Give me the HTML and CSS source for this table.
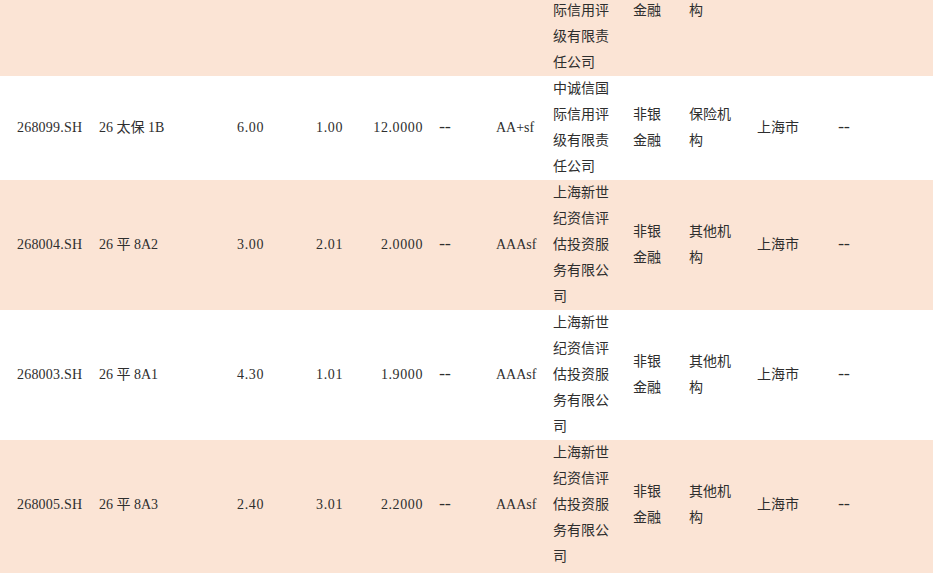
FILE: index.html
```html
<!DOCTYPE html>
<html lang="zh-CN">
<head>
<meta charset="utf-8">
<title>债券列表</title>
<link rel="stylesheet" href="styles.css">
</head>
<body>
<table class="bonds">
  <colgroup>
    <col class="w-code"><col class="w-name"><col class="w-n1"><col class="w-n2"><col class="w-n3"><col class="w-dash"><col class="w-rate"><col class="w-org"><col class="w-type"><col class="w-sub"><col class="w-city"><col class="w-last">
  </colgroup>
  <tbody>
    <tr class="odd clip">
      <td class="code"></td><td></td><td></td><td></td><td></td><td></td><td></td>
      <td>际信用评级有限责任公司</td>
      <td>金融</td>
      <td>构</td>
      <td></td><td></td>
    </tr>
    <tr class="even">
      <td class="code">268099.SH</td>
      <td>26 太保 1B</td>
      <td class="num">6.00</td>
      <td class="num">1.00</td>
      <td class="num">12.0000</td>
      <td class="dash">--</td>
      <td>AA+sf</td>
      <td>中诚信国际信用评级有限责任公司</td>
      <td>非银金融</td>
      <td>保险机构</td>
      <td>上海市</td>
      <td class="dash">--</td>
    </tr>
    <tr class="odd">
      <td class="code">268004.SH</td>
      <td>26 平 8A2</td>
      <td class="num">3.00</td>
      <td class="num">2.01</td>
      <td class="num">2.0000</td>
      <td class="dash">--</td>
      <td>AAAsf</td>
      <td>上海新世纪资信评估投资服务有限公司</td>
      <td>非银金融</td>
      <td>其他机构</td>
      <td>上海市</td>
      <td class="dash">--</td>
    </tr>
    <tr class="even">
      <td class="code">268003.SH</td>
      <td>26 平 8A1</td>
      <td class="num">4.30</td>
      <td class="num">1.01</td>
      <td class="num">1.9000</td>
      <td class="dash">--</td>
      <td>AAAsf</td>
      <td>上海新世纪资信评估投资服务有限公司</td>
      <td>非银金融</td>
      <td>其他机构</td>
      <td>上海市</td>
      <td class="dash">--</td>
    </tr>
    <tr class="odd last">
      <td class="code">268005.SH</td>
      <td>26 平 8A3</td>
      <td class="num">2.40</td>
      <td class="num">3.01</td>
      <td class="num">2.2000</td>
      <td class="dash">--</td>
      <td>AAAsf</td>
      <td>上海新世纪资信评估投资服务有限公司</td>
      <td>非银金融</td>
      <td>其他机构</td>
      <td>上海市</td>
      <td class="dash">--</td>
    </tr>
  </tbody>
</table>
</body>
</html>
```

FILE: styles.css
```css
html, body {
  margin: 0;
  padding: 0;
  background: #ffffff;
}

body {
  font-family: "Liberation Serif", "Noto Sans CJK SC", serif;
  font-size: 14px;
  color: #2e2e2e;
  overflow: hidden;
}

.bonds {
  width: 933px;
  table-layout: fixed;
  border-collapse: collapse;
  border-spacing: 0;
  margin-top: -2px;
}

.w-code { width: 91px; }
.w-name { width: 100px; }
.w-n1 { width: 80px; }
.w-n2 { width: 79px; }
.w-n3 { width: 80px; }
.w-dash { width: 58px; }
.w-rate { width: 57px; }
.w-org { width: 80px; }
.w-type { width: 56px; }
.w-sub { width: 68px; }
.w-city { width: 80px; }
.w-last { width: 104px; }

.bonds td {
  box-sizing: border-box;
  padding: 0 8px;
  line-height: 26px;
  vertical-align: middle;
  text-align: left;
  word-break: break-all;
}

.bonds td.code {
  padding-left: 17px;
  padding-right: 0;
  white-space: nowrap;
  letter-spacing: 0.2px;
}

.bonds td.num {
  text-align: right;
  white-space: nowrap;
  letter-spacing: 0.6px;
  padding-right: 7px;
}

.bonds td.dash {
  font-family: "Liberation Mono", monospace;
  font-size: 17px;
  letter-spacing: -4.5px;
  padding-left: 7px;
}

.odd td { background: #fbe4d5; }
.even td { background: #ffffff; }

.clip td { vertical-align: top; }

.last td { padding-bottom: 3px; }
```
